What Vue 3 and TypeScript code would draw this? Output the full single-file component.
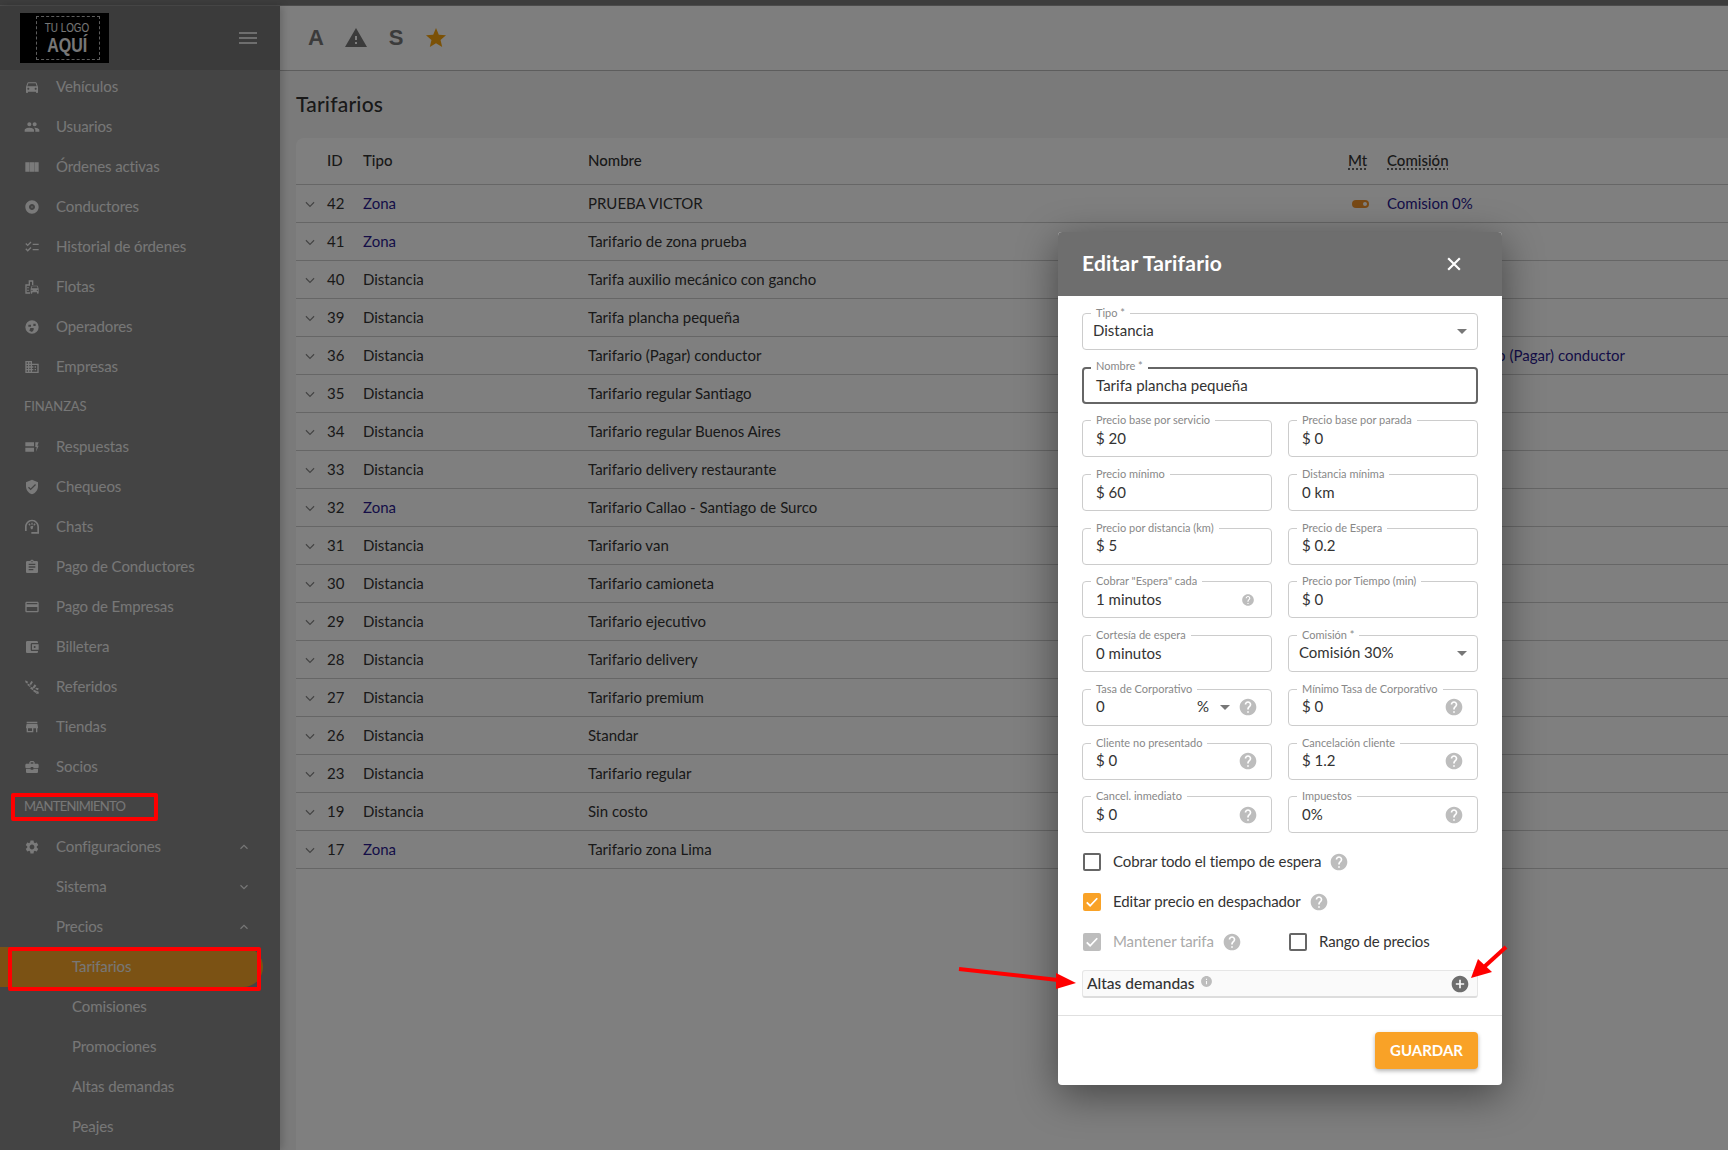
<template>
  <div class="page">
    <div class="top-strip"></div>
    <div class="shell">
      <aside class="sidebar">
        <div class="brand">
          <div class="logo">
            <div class="logo-frame">
              <span class="logo-top">TU LOGO</span>
              <span class="logo-big">AQUÍ</span>
            </div>
          </div>
          <div class="burger"><i></i><i></i><i></i></div>
        </div>
        <nav class="nav">
          <template v-for="item in menu" :key="item.label">
            <div v-if="item.section" class="nav-section" :class="{ tight: item.tight }">{{ item.label }}</div>
            <div v-else class="nav-row" :class="[item.level ? 'lvl' + item.level : '', { active: item.active }]">
              <svg v-if="item.icon" class="nav-icon" viewBox="0 0 24 24"><path :d="icons[item.icon]" /></svg>
              <span>{{ item.label }}</span>
              <svg v-if="item.chevron" class="nav-chev" viewBox="0 0 24 24">
                <path :d="item.chevron === 'up' ? 'M6 15l6-6 6 6' : 'M6 9l6 6 6-6'" />
              </svg>
            </div>
          </template>
        </nav>
      </aside>

      <main class="main">
        <div class="toolbar">
          <span class="tool-letter">A</span>
          <svg class="tool-icon" viewBox="0 0 24 24"><path d="M1 21h22L12 2 1 21zm12-3h-2v-2h2v2zm0-4h-2v-4h2v4z" /></svg>
          <span class="tool-letter">S</span>
          <svg class="tool-icon star" viewBox="0 0 24 24"><path d="M12 17.27L18.18 21l-1.64-7.03L22 9.24l-7.19-.61L12 2 9.19 8.63 2 9.24l5.46 4.73L5.82 21z" /></svg>
        </div>
        <h1 class="title">Tarifarios</h1>
        <section class="card">
          <div class="row head">
            <span></span>
            <span>ID</span>
            <span>Tipo</span>
            <span>Nombre</span>
            <span><u>Mt</u></span>
            <span><u>Comisión</u></span>
          </div>
          <div v-for="r in rows" :key="r.id" class="row">
            <svg class="row-chev" viewBox="0 0 24 24"><path d="M5 9l7 7 7-7" /></svg>
            <span>{{ r.id }}</span>
            <span :class="{ link: r.tipo === 'Zona' }">{{ r.tipo }}</span>
            <span>{{ r.nombre }}</span>
            <span><i v-if="r.mt" class="toggle"></i></span>
            <span class="link">{{ r.comision }}</span>
          </div>
        </section>
      </main>
    </div>

    <div class="scrim"></div>

    <div class="dialog">
      <header class="dialog-head">
        <span>Editar Tarifario</span>
        <svg class="close" viewBox="0 0 24 24"><path d="M5 5l14 14M19 5L5 19" /></svg>
      </header>
      <div class="dialog-body">
        <div class="fields">
          <div
            v-for="f in fields"
            :key="f.label"
            class="field"
            :class="{ wide: f.wide, focus: f.focus, select: f.select }"
          >
            <label>{{ f.label }}</label>
            <span class="value">{{ f.value }}</span>
            <span v-if="f.unit" class="unit">{{ f.unit }}</span>
            <i v-if="f.select || f.unit" class="caret"></i>
            <svg v-if="f.help" class="help" :class="f.help" viewBox="0 0 24 24"><path :d="helpPath" /></svg>
          </div>
        </div>

        <div class="checks">
          <div class="check-row">
            <span class="box"></span>
            <span class="check-text">Cobrar todo el tiempo de espera</span>
            <svg class="help" viewBox="0 0 24 24"><path :d="helpPath" /></svg>
          </div>
          <div class="check-row">
            <span class="box on">
              <svg viewBox="0 0 24 24"><path d="M5 12.5l4.5 4.5L19 7" /></svg>
            </span>
            <span class="check-text">Editar precio en despachador</span>
            <svg class="help" viewBox="0 0 24 24"><path :d="helpPath" /></svg>
          </div>
          <div class="check-split">
            <div class="check-row disabled">
              <span class="box on">
                <svg viewBox="0 0 24 24"><path d="M5 12.5l4.5 4.5L19 7" /></svg>
              </span>
              <span class="check-text">Mantener tarifa</span>
              <svg class="help" viewBox="0 0 24 24"><path :d="helpPath" /></svg>
            </div>
            <div class="check-row">
              <span class="box"></span>
              <span class="check-text">Rango de precios</span>
            </div>
          </div>
        </div>

        <div class="panel">
          <span class="panel-text">Altas demandas</span>
          <svg class="info" viewBox="0 0 24 24">
            <path d="M12 2C6.48 2 2 6.48 2 12s4.48 10 10 10 10-4.48 10-10S17.52 2 12 2zm1 15h-2v-6h2v6zm0-8h-2V7h2v2z" />
          </svg>
          <svg class="plus" viewBox="0 0 24 24">
            <path d="M12 2C6.48 2 2 6.48 2 12s4.48 10 10 10 10-4.48 10-10S17.52 2 12 2zm5 11h-4v4h-2v-4H7v-2h4V7h2v4h4v2z" />
          </svg>
        </div>
      </div>
      <footer class="dialog-foot">
        <button class="save">GUARDAR</button>
      </footer>
    </div>

    <!-- red marks drawn on top of the capture -->
    <div class="mark mark-section"></div>
    <div class="mark mark-active"></div>
    <svg class="arrows" viewBox="0 0 1728 1150">
      <path d="M959 969L1058 980" />
      <path d="M1506 947L1484 967" />
      <polygon points="1076,983 1056,973 1056,989" />
      <polygon points="1471,978 1478,959 1492,972" />
    </svg>
  </div>
</template>

<script setup lang="ts">
interface MenuItem {
  label: string
  icon?: string
  section?: boolean
  tight?: boolean
  level?: number
  chevron?: 'up' | 'down'
  active?: boolean
}

interface Field {
  label: string
  value: string
  wide?: boolean
  focus?: boolean
  select?: boolean
  unit?: string
  help?: 'big' | 'small'
}

const helpPath =
  'M12 2C6.48 2 2 6.48 2 12s4.48 10 10 10 10-4.48 10-10S17.52 2 12 2zm1 17h-2v-2h2v2zm2.07-7.75l-.9.92C13.45 12.9 13 13.5 13 15h-2v-.5c0-1.1.45-2.1 1.17-2.83l1.24-1.26c.37-.36.59-.86.59-1.41 0-1.1-.9-2-2-2s-2 .9-2 2H8c0-2.21 1.79-4 4-4s4 1.79 4 4c0 .88-.36 1.68-.93 2.25z'

const icons: Record<string, string> = {
  car: 'M18.92 6.01C18.72 5.42 18.16 5 17.5 5h-11c-.66 0-1.21.42-1.42 1.01L3 12v8c0 .55.45 1 1 1h1c.55 0 1-.45 1-1v-1h12v1c0 .55.45 1 1 1h1c.55 0 1-.45 1-1v-8l-2.08-5.99zM6.5 16c-.83 0-1.5-.67-1.5-1.5S5.67 13 6.5 13s1.5.67 1.5 1.5S7.33 16 6.5 16zm11 0c-.83 0-1.5-.67-1.5-1.5s.67-1.5 1.500-1.500 1.500.67 1.500 1.500-.67 1.500-1.500 1.500zM5 11l1.500-4.500h11L19 11H5z',
  people: 'M16 11c1.66 0 2.99-1.34 2.99-3S17.66 5 16 5c-1.66 0-3 1.34-3 3s1.34 3 3 3zm-8 0c1.66 0 2.99-1.34 2.99-3S9.66 5 8 5C6.34 5 5 6.34 5 8s1.34 3 3 3zm0 2c-2.33 0-7 1.17-7 3.5V19h14v-2.5c0-2.33-4.67-3.5-7-3.5zm8 0c-.29 0-.62.02-.97.05 1.16.84 1.97 1.97 1.97 3.45V19h6v-2.5c0-2.33-4.67-3.5-7-3.5z',
  week: 'M2 5h6.400v14H2zM8.900 5h6.200v14H8.900zM15.600 5H22v14h-6.400z',
  album: 'M12 2C6.48 2 2 6.48 2 12s4.48 10 10 10 10-4.48 10-10S17.52 2 12 2zm0 14.5c-2.49 0-4.5-2.01-4.5-4.5S9.51 7.5 12 7.5s4.5 2.01 4.5 4.5-2.01 4.5-4.5 4.5zm0-5.5c-.55 0-1 .45-1 1s.45 1 1 1 1-.45 1-1-.45-1-1-1z',
  checklist: 'M22 7h-9v2h9V7zm0 8h-9v2h9v-2zM5.54 11 2 7.46l1.41-1.41 2.12 2.12 4.24-4.24 1.41 1.41L5.54 11zm0 8L2 15.46l1.41-1.41 2.12 2.12 4.24-4.24 1.41 1.41L5.54 19z',
  fleet: 'M20.57 10.66c-.14-.4-.52-.66-.97-.66h-7.19c-.46 0-.83.26-.98.66L10 14.77V21c0 .55.4 1 .9 1h.7c.5 0 .9-.45.9-1v-1h7v1c0 .55.4 1 .9 1h.7c.5 0 .9-.45.9-1v-6.23l-1.43-4.11zM12.41 11h7.19l1.03 3h-9.25l1.03-3zM12 18c-.55 0-1-.45-1-1s.45-1 1-1 1 .45 1 1-.45 1-1 1zm8 0c-.55 0-1-.45-1-1s.45-1 1-1 1 .45 1 1-.45 1-1 1zM14 9V2H7v6H2v14h7v-2H4V10h5V4h3v5h2zM5 12h2v2H5zm0 4h2v2H5z',
  public: 'M12 2a10 10 0 1 0 0 20 10 10 0 0 0 0-20zM6.500 8.500h4v3h-4zM14 7h3.500v3.500H14zM9.500 13.500h5v3l-2.500 3-4-2z',
  domain: 'M12 7V3H2v18h20V7H12zM6 19H4v-2h2v2zm0-4H4v-2h2v2zm0-4H4V9h2v2zm0-4H4V5h2v2zm4 12H8v-2h2v2zm0-4H8v-2h2v2zm0-4H8V9h2v2zm0-4H8V5h2v2zm10 12h-8v-2h2v-2h-2v-2h2v-2h-2V9h8v10zm-2-8h-2v2h2v-2zm0 4h-2v2h2v-2z',
  answers: 'M2 5h13v6H2zM2 13h13v6H2zM17 5h5l-2 5h2l-4 9 1-7h-2z',
  shield: 'M12 1L3 5v6c0 5.55 3.84 10.74 9 12 5.16-1.26 9-6.45 9-12V5l-9-4zm-2 16l-4-4 1.41-1.41L10 14.17l6.59-6.59L18 9l-8 8z',
  gauge: 'M12 1C6 1 1.500 6 1.500 12v6h2.500v-6c0-4.500 3.500-8.500 8-8.500s8 4 8 8.500v7.500H11V22h11.500V12C22.500 6 18 1 12 1zM11 5.500h2v3h-2zM6.500 8l1.500-1.500 2 2L8.500 10zM16 6.500L17.500 8l-2 2-1.500-1.500zM10 11l4-1-1 4.500c-.4.9-1.400 1.200-2.200.7-1-.7-1.500-3-.8-4.200z',
  clipboard: 'M19 3h-4.18C14.4 1.84 13.3 1 12 1c-1.3 0-2.4.84-2.82 2H5c-1.1 0-2 .9-2 2v14c0 1.1.9 2 2 2h14c1.1 0 2-.9 2-2V5c0-1.1-.9-2-2-2zm-7 0c.55 0 1 .45 1 1s-.45 1-1 1-1-.45-1-1 .45-1 1-1zm2 14H7v-2h7v2zm3-4H7v-2h10v2zm0-4H7V7h10v2z',
  card: 'M20 4H4c-1.11 0-1.99.89-1.99 2L2 18c0 1.11.89 2 2 2h16c1.11 0 2-.89 2-2V6c0-1.11-.89-2-2-2zm0 14H4v-6h16v6zm0-10H4V6h16v2z',
  wallet: 'M21 18v1c0 1.1-.9 2-2 2H5c-1.11 0-2-.9-2-2V5c0-1.1.89-2 2-2h14c1.1 0 2 .9 2 2v1h-9c-1.11 0-2 .9-2 2v8c0 1.1.89 2 2 2h9zm-9-2h10V8H12v8zm4-2.5c-.83 0-1.5-.67-1.5-1.5s.67-1.5 1.5-1.5 1.5.67 1.5 1.5-.67 1.5-1.5 1.5z',
  referral: 'M2 2l4 2-1 3-3-2zM6 7l5 2-2 3-4-3zM11 3l2.500 1.500-4 6L7.500 9zM11 12l4 2-2 3-4-3zM16 8l2.500 2-4 5-2-2zM15 16l4 2-1.500 3-4-3zM19 18l3 1v3h-4zM18 13l4 1-1 3-4-2z',
  store: 'M20 4H4v2h16V4zm1 10v-2l-1-5H4l-1 5v2h1v6h10v-6h4v6h2v-6h1zm-9 4H6v-4h6v4z',
  briefcase: 'M10 16v-1H3.01L3 19c0 1.11.89 2 2 2h14c1.11 0 2-.89 2-2v-4h-7v1h-4zm10-9h-4.010V5l-2-2h-4l-2 2v2H4c-1.100 0-2 .9-2 2v3c0 1.110.89 2 2 2h6v-2h4v2h6c1.100 0 2-.9 2-2V9c0-1.100-.9-2-2-2zm-6 0h-4V5h4v2z',
  settings: 'M19.14 12.94c.04-.3.06-.61.06-.94 0-.32-.02-.64-.07-.94l2.03-1.58c.18-.14.23-.41.12-.61l-1.92-3.32c-.12-.22-.37-.29-.59-.22l-2.39.96c-.5-.38-1.03-.7-1.62-.94l-.36-2.54c-.04-.24-.24-.41-.48-.41h-3.84c-.24 0-.43.17-.47.41l-.36 2.54c-.59.24-1.13.57-1.62.94l-2.39-.96c-.22-.08-.47 0-.59.22L2.74 8.87c-.12.21-.08.47.12.61l2.03 1.58c-.05.3-.09.63-.09.94s.02.64.07.94l-2.03 1.58c-.18.14-.23.41-.12.61l1.92 3.32c.12.22.37.29.59.22l2.39-.96c.5.38 1.03.7 1.62.94l.36 2.54c.05.24.24.41.48.41h3.84c.24 0 .44-.17.47-.41l.36-2.54c.59-.24 1.13-.56 1.62-.94l2.39.96c.22.08.47 0 .59-.22l1.92-3.32c.12-.22.07-.47-.12-.61l-2.01-1.58zM12 15.6c-1.98 0-3.6-1.62-3.6-3.6s1.62-3.6 3.6-3.6 3.6 1.62 3.6 3.6-1.62 3.6-3.6 3.6z',
}

const menu: MenuItem[] = [
  { label: 'Vehículos', icon: 'car' },
  { label: 'Usuarios', icon: 'people' },
  { label: 'Órdenes activas', icon: 'week' },
  { label: 'Conductores', icon: 'album' },
  { label: 'Historial de órdenes', icon: 'checklist' },
  { label: 'Flotas', icon: 'fleet' },
  { label: 'Operadores', icon: 'public' },
  { label: 'Empresas', icon: 'domain' },
  { label: 'FINANZAS', section: true },
  { label: 'Respuestas', icon: 'answers' },
  { label: 'Chequeos', icon: 'shield' },
  { label: 'Chats', icon: 'gauge' },
  { label: 'Pago de Conductores', icon: 'clipboard' },
  { label: 'Pago de Empresas', icon: 'card' },
  { label: 'Billetera', icon: 'wallet' },
  { label: 'Referidos', icon: 'referral' },
  { label: 'Tiendas', icon: 'store' },
  { label: 'Socios', icon: 'briefcase' },
  { label: 'MANTENIMIENTO', section: true, tight: true },
  { label: 'Configuraciones', icon: 'settings', chevron: 'up' },
  { label: 'Sistema', level: 1, chevron: 'down' },
  { label: 'Precios', level: 1, chevron: 'up' },
  { label: 'Tarifarios', level: 2, active: true },
  { label: 'Comisiones', level: 2 },
  { label: 'Promociones', level: 2 },
  { label: 'Altas demandas', level: 2 },
  { label: 'Peajes', level: 2 },
]

const rows = [
  { id: 42, tipo: 'Zona', nombre: 'PRUEBA VICTOR', mt: true, comision: 'Comision 0%' },
  { id: 41, tipo: 'Zona', nombre: 'Tarifario de zona prueba' },
  { id: 40, tipo: 'Distancia', nombre: 'Tarifa auxilio mecánico con gancho' },
  { id: 39, tipo: 'Distancia', nombre: 'Tarifa plancha pequeña' },
  { id: 36, tipo: 'Distancia', nombre: 'Tarifario (Pagar) conductor', comision: 'Comision Tarifario (Pagar) conductor' },
  { id: 35, tipo: 'Distancia', nombre: 'Tarifario regular Santiago' },
  { id: 34, tipo: 'Distancia', nombre: 'Tarifario regular Buenos Aires' },
  { id: 33, tipo: 'Distancia', nombre: 'Tarifario delivery restaurante' },
  { id: 32, tipo: 'Zona', nombre: 'Tarifario Callao - Santiago de Surco' },
  { id: 31, tipo: 'Distancia', nombre: 'Tarifario van' },
  { id: 30, tipo: 'Distancia', nombre: 'Tarifario camioneta' },
  { id: 29, tipo: 'Distancia', nombre: 'Tarifario ejecutivo' },
  { id: 28, tipo: 'Distancia', nombre: 'Tarifario delivery' },
  { id: 27, tipo: 'Distancia', nombre: 'Tarifario premium' },
  { id: 26, tipo: 'Distancia', nombre: 'Standar' },
  { id: 23, tipo: 'Distancia', nombre: 'Tarifario regular' },
  { id: 19, tipo: 'Distancia', nombre: 'Sin costo' },
  { id: 17, tipo: 'Zona', nombre: 'Tarifario zona Lima' },
]

const fields: Field[] = [
  { label: 'Tipo *', value: 'Distancia', wide: true, select: true },
  { label: 'Nombre *', value: 'Tarifa plancha pequeña', wide: true, focus: true },
  { label: 'Precio base por servicio', value: '$ 20' },
  { label: 'Precio base por parada', value: '$ 0' },
  { label: 'Precio mínimo', value: '$ 60' },
  { label: 'Distancia mínima', value: '0 km' },
  { label: 'Precio por distancia (km)', value: '$ 5' },
  { label: 'Precio de Espera', value: '$ 0.2' },
  { label: 'Cobrar "Espera" cada', value: '1 minutos', help: 'small' },
  { label: 'Precio por Tiempo (min)', value: '$ 0' },
  { label: 'Cortesía de espera', value: '0 minutos' },
  { label: 'Comisión *', value: 'Comisión 30%', select: true },
  { label: 'Tasa de Corporativo', value: '0', unit: '%', help: 'big' },
  { label: 'Mínimo Tasa de Corporativo', value: '$ 0', help: 'big' },
  { label: 'Cliente no presentado', value: '$ 0', help: 'big' },
  { label: 'Cancelación cliente', value: '$ 1.2', help: 'big' },
  { label: 'Cancel. inmediato', value: '$ 0', help: 'big' },
  { label: 'Impuestos', value: '0%', help: 'big' },
]
</script>

<style>
html, body {
  margin: 0;
  overflow: hidden;
}
</style>

<style scoped>
.page {
  position: relative;
  height: 1150px;
  overflow: hidden;
  font-family: Lato, "Noto Sans", sans-serif;
  color: #333;
  background: #f5f5f5;
}

.top-strip {
  height: 5px;
  background: #7a7a7a;
  border-bottom: 1px solid #999;
}

.shell {
  display: flex;
  height: 1144px;
}

/* Sidebar */
.sidebar {
  width: 280px;
  flex: none;
  display: flex;
  flex-direction: column;
  background: #888;
  overflow: hidden;
  box-shadow: 2px 0 8px rgba(0, 0, 0, 0.2);
  z-index: 1;
}
.brand {
  height: 64px;
  flex: none;
  display: flex;
  align-items: center;
  justify-content: space-between;
  padding: 0 23px 0 20px;
  background: #767676;
  position: relative;
  z-index: 1;
}
.logo {
  width: 89px;
  height: 50px;
  background: #000;
  display: flex;
  align-items: center;
  justify-content: center;
}
.logo-frame {
  width: 62px;
  height: 42px;
  margin-left: 6px;
  border: 1px dashed #bbb;
  display: flex;
  flex-direction: column;
  align-items: center;
  justify-content: center;
  color: #eee;
  font-family: "Liberation Sans", sans-serif;
  line-height: 1;
}
.logo-top {
  font-size: 12px;
  transform: scaleX(0.82);
}
.logo-big {
  font-size: 21px;
  font-weight: 700;
  transform: scaleX(0.76);
}
.burger {
  display: flex;
  flex-direction: column;
  gap: 3px;
  width: 18px;
}
.burger i {
  height: 2px;
  background: #ddd;
}
.nav {
  margin-top: -3px;
  color: #eee;
  font-size: 15px;
  letter-spacing: -0.1px;
}
.nav-row,
.nav-section {
  height: 40px;
  display: flex;
  align-items: center;
}
.nav-row {
  padding-left: 24px;
  gap: 16px;
  position: relative;
}
.nav-row > span {
  margin-top: -2px;
}
.nav-row.lvl1 {
  padding-left: 56px;
}
.nav-row.lvl2 {
  padding-left: 72px;
}
.nav-row.active {
  width: 263px;
  box-sizing: border-box;
  background: #f7a528;
  border-radius: 0 20px 20px 0;
}
.nav-section {
  padding-left: 24px;
  padding-bottom: 2px;
  box-sizing: border-box;
  font-size: 13px;
}
.nav-section.tight {
  letter-spacing: -0.7px;
}
.nav-icon {
  width: 16px;
  height: 16px;
  fill: #f5f5f5;
  fill-rule: evenodd;
  flex: none;
}
.nav-chev {
  position: absolute;
  left: 237px;
  width: 14px;
  height: 14px;
  fill: none;
  stroke: #eee;
  stroke-width: 2;
}

/* Main */
.main {
  flex: 1;
  min-width: 0;
  display: flex;
  flex-direction: column;
}
.toolbar {
  height: 65px;
  flex: none;
  box-sizing: border-box;
  display: flex;
  align-items: center;
  padding-left: 22px;
  background: #fcfcfc;
  border-bottom: 1px solid #bbb;
}
.toolbar > * {
  width: 28px;
  margin-right: 12px;
  text-align: center;
}
.tool-letter {
  font-family: "Liberation Sans", sans-serif;
  font-size: 22px;
  font-weight: 700;
  color: #777;
}
.tool-icon {
  height: 24px;
  fill: #777;
}
.tool-icon.star {
  fill: #f7a30c;
}
.title {
  margin: 20px 0 22px 16px;
  font-size: 21px;
  letter-spacing: 0.2px;
  line-height: 25px;
  font-weight: 500;
  color: #333;
}
.card {
  flex: 1;
  margin-left: 16px;
  background: #fff;
  border-radius: 8px 0 0 0;
  font-size: 15px;
}
.row {
  display: grid;
  grid-template-columns: 31px 36px 225px 760px 39px 1fr;
  align-items: center;
  height: 38px;
  box-sizing: border-box;
  border-bottom: 1px solid #ccc;
  white-space: nowrap;
}
.row > span {
  margin-top: -2px;
}
.row.head {
  height: 47px;
  font-weight: 500;
}
.row.head u {
  text-decoration: underline dotted;
  text-underline-offset: 3px;
}
.row-chev {
  width: 14px;
  height: 14px;
  margin-left: 7px;
  fill: none;
  stroke: #888;
  stroke-width: 2;
}
.link {
  color: #2a1a8f;
}
.toggle {
  display: block;
  position: relative;
  width: 17px;
  height: 8px;
  margin: 2px 0 0 4px;
  border-radius: 4px;
  background: #f0932b;
}
.toggle::after {
  content: "";
  position: absolute;
  right: 2px;
  top: 2px;
  width: 4px;
  height: 4px;
  border-radius: 50%;
  background: #fff;
}

.scrim {
  position: absolute;
  inset: 0;
  background: rgba(0, 0, 0, 0.5);
  z-index: 2;
}

/* Dialog */
.dialog {
  position: absolute;
  left: 1058px;
  top: 232px;
  width: 444px;
  z-index: 3;
  background: #fff;
  border-radius: 4px;
  overflow: hidden;
  box-shadow: 0 10px 40px rgba(0, 0, 0, 0.45);
}
.dialog-head {
  height: 64px;
  display: flex;
  align-items: center;
  justify-content: space-between;
  padding: 0 38px 0 24px;
  background: #6e6e6e;
  color: #fff;
  font-size: 21px;
  letter-spacing: 0.2px;
  font-weight: 700;
}
.dialog-head > span {
  margin-top: -3px;
}
.close {
  width: 20px;
  height: 20px;
  fill: none;
  stroke: #fff;
  stroke-width: 2.6;
}
.dialog-body {
  padding: 17px 24px;
  border-bottom: 1px solid #e0e0e0;
}
.fields {
  display: grid;
  grid-template-columns: 1fr 1fr;
  gap: 16.7px 16px;
}
.field {
  position: relative;
  height: 37px;
  box-sizing: border-box;
  display: flex;
  align-items: center;
  padding: 0 13px;
  border: 1px solid #ccc;
  border-radius: 4px;
  font-size: 15px;
}
.field.wide {
  grid-column: span 2;
}
.field.focus {
  border: 2px solid #666;
  padding: 0 12px;
}
.field.select {
  padding-left: 10px;
}
.value {
  margin-top: -2px;
}
.field.select .value {
  margin-top: -4px;
}
.field.focus .value {
  margin-top: 0;
}
.field label {
  position: absolute;
  left: 8px;
  top: -8px;
  padding: 0 5px;
  background: #fff;
  font-size: 11px;
  line-height: 13px;
  color: #888;
  white-space: nowrap;
}
.field.focus label {
  left: 7px;
  top: -10px;
}
.unit {
  margin-left: auto;
  margin-right: 11px;
  margin-top: -2px;
}
.caret {
  width: 0;
  height: 0;
  border-left: 5px solid transparent;
  border-right: 5px solid transparent;
  border-top: 5px solid #777;
}
.field.select .caret {
  margin-left: auto;
  margin-right: -3px;
}
.field .help {
  margin-left: auto;
}
.field .unit ~ .help {
  margin-left: 8px;
}
.help {
  width: 20px;
  height: 20px;
  fill: #bdbdbd;
  flex: none;
}
.help.small {
  width: 14px;
  height: 14px;
  margin-right: 3px;
}

.checks {
  display: flex;
  flex-direction: column;
  gap: 22px;
  margin-top: 20px;
  font-size: 15px;
}
.check-row {
  height: 18px;
  display: flex;
  align-items: center;
  padding-left: 1px;
}
.check-text {
  margin-top: -2px;
  letter-spacing: -0.12px;
}
.check-row .help {
  margin-left: 8px;
}
.check-row.disabled {
  color: #aaa;
}
.check-split {
  display: grid;
  grid-template-columns: 1fr 1fr;
  gap: 16px;
}
.box {
  width: 18px;
  height: 18px;
  box-sizing: border-box;
  margin-right: 12px;
  border: 2px solid #666;
  border-radius: 2px;
  flex: none;
}
.box.on {
  border: none;
  background: #f9a227;
}
.disabled .box.on {
  background: #bdbdbd;
}
.box svg {
  display: block;
  fill: none;
  stroke: #fff;
  stroke-width: 2.4;
}

.panel {
  height: 28px;
  box-sizing: border-box;
  margin-top: 19px;
  display: flex;
  align-items: center;
  padding: 0 7px 0 4px;
  background: #fafafa;
  border: 1px solid #e6e6e6;
  border-bottom: 2px solid #ddd;
  border-radius: 3px;
  font-size: 15.5px;
  font-weight: 500;
}
.panel-text {
  margin-top: -1px;
}
.info {
  width: 13px;
  height: 13px;
  margin: -5px 0 0 5px;
  fill: #bdbdbd;
}
.plus {
  width: 20px;
  height: 20px;
  margin-left: auto;
  fill: #6e6e6e;
}
.dialog-foot {
  display: flex;
  justify-content: flex-end;
  padding: 16px 24px;
}
.save {
  width: 103px;
  height: 37px;
  padding: 0 0 2px;
  border: none;
  border-radius: 4px;
  background: #f9a227;
  color: #fff;
  font: 700 15px Lato, sans-serif;
  box-shadow: 0 2px 4px rgba(0, 0, 0, 0.3);
}

/* Annotations */
.mark {
  position: absolute;
  z-index: 4;
  box-sizing: border-box;
  border: 4px solid #f00;
  border-radius: 2px;
}
.mark-section {
  left: 11px;
  top: 793px;
  width: 147px;
  height: 28px;
}
.mark-active {
  left: 8px;
  top: 947px;
  width: 253px;
  height: 44px;
}
.arrows {
  position: absolute;
  inset: 0;
  z-index: 4;
  width: 1728px;
  height: 1150px;
  pointer-events: none;
}
.arrows path {
  stroke: #f00;
  stroke-width: 4;
  fill: none;
}
.arrows polygon {
  fill: #f00;
}
</style>
